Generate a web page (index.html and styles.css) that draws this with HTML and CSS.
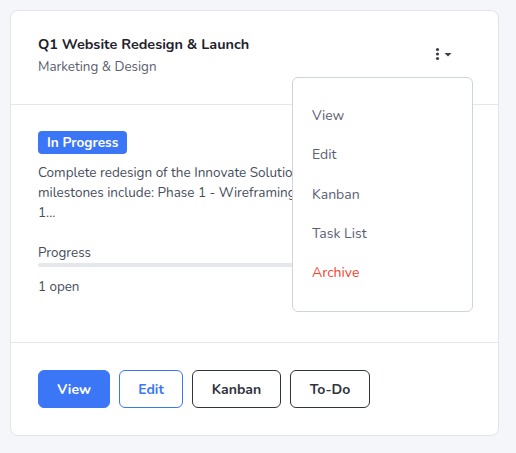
FILE: index.html
```html
<!DOCTYPE html>
<html>
<head>
<meta charset="utf-8">
<link rel="stylesheet" href="styles.css">
</head>
<body>
<div class="page">
  <div class="card">
    <div class="card-header">
      <div class="titles">
        <div class="title">Q1 Website Redesign &amp; Launch</div>
        <div class="subtitle">Marketing &amp; Design</div>
      </div>
      <div class="menu-wrap">
        <button class="kebab" aria-label="More">
          <svg width="20" height="14" viewBox="0 0 20 14">
            <circle cx="3.5" cy="2.5" r="1.6" fill="#3a3f4b"/>
            <circle cx="3.5" cy="7" r="1.6" fill="#3a3f4b"/>
            <circle cx="3.5" cy="11.5" r="1.6" fill="#3a3f4b"/>
            <path d="M10.5 6 L17.5 6 L14 9.5 Z" fill="#3a3f4b"/>
          </svg>
        </button>
        <ul class="dropdown">
          <li>View</li>
          <li>Edit</li>
          <li>Kanban</li>
          <li>Task List</li>
          <li class="danger">Archive</li>
        </ul>
      </div>
    </div>
    <div class="card-body">
      <span class="badge">In Progress</span>
      <p class="desc">Complete redesign of the Innovate Solutions corporate website. Key<br>milestones include: Phase 1 - Wireframing &amp; Prototyping (Due: Jan<br>1...</p>
      <div class="progress-label">Progress</div>
      <div class="progress"><div class="progress-fill" style="width:0%"></div></div>
      <div class="open">1 open</div>
    </div>
    <div class="card-footer">
      <button class="btn btn-primary">View</button>
      <button class="btn btn-outline-primary">Edit</button>
      <button class="btn btn-outline-dark btn-kanban">Kanban</button>
      <button class="btn btn-outline-dark btn-todo">To-Do</button>
    </div>
  </div>
</div>
</body>
</html>
```
FILE: styles.css
```css
* { box-sizing: border-box; }
html, body {
  margin: 0;
  padding: 0;
  background: #f4f6fa;
  font-family: "Nunito", "Lato", "Noto Sans", sans-serif;
}
.page {
  padding: 10px 17px 17px 10px;
}
.card {
  width: 489px;
  background: #fff;
  border: 1px solid #e1e4ea;
  border-radius: 8px;
}
.card-header {
  display: flex;
  justify-content: space-between;
  align-items: flex-start;
  padding: 23px 27px 28px 27px;
  border-bottom: 1px solid #e6e8ee;
}
.title {
  font-size: 14.4px;
  font-weight: 700;
  line-height: 21px;
  color: #1e222c;
}
.subtitle {
  margin-top: 3px;
  font-size: 13.4px;
  line-height: 18px;
  color: #5a6070;
}
.menu-wrap {
  position: relative;
  margin-top: 13px;
  margin-right: 17px;
}
.kebab {
  display: block;
  border: 0;
  background: transparent;
  padding: 0;
  width: 20px;
  height: 14px;
  cursor: pointer;
}
.kebab svg { display: block; }
.dropdown {
  position: absolute;
  top: 30px;
  right: -19px;
  width: 181px;
  margin: 0;
  padding: 18px 0 19px;
  list-style: none;
  background: #fff;
  border: 1px solid #cfd3dd;
  border-radius: 6px;
  z-index: 5;
}
.dropdown li {
  padding: 0 19px;
  line-height: 39.3px;
  font-size: 14px;
  color: #5a6074;
}
.dropdown li.danger { color: #f4432f; }
.card-body {
  padding: 26px 27px 45px 27px;
  border-bottom: 1px solid #e6e8ee;
}
.badge {
  display: inline-block;
  height: 23px;
  line-height: 23px;
  padding: 0 9px;
  background: #3b76f6;
  color: #fff;
  font-size: 13.6px;
  font-weight: 700;
  border-radius: 4px;
}
.desc {
  margin: 9px 0 0;
  font-size: 13.5px;
  line-height: 20px;
  color: #474d5c;
  white-space: nowrap;
  overflow: hidden;
}
.progress-label {
  margin-top: 20px;
  font-size: 13.4px;
  line-height: 20px;
  color: #474d5c;
}
.progress {
  height: 4px;
  background: #e4e7ec;
  border-radius: 2px;
  overflow: hidden;
}
.progress-fill {
  height: 100%;
  background: #3b76f6;
}
.open {
  margin-top: 10px;
  font-size: 13.4px;
  line-height: 20px;
  color: #474d5c;
}
.card-footer {
  display: flex;
  gap: 9px;
  padding: 27px;
}
.btn {
  height: 38px;
  padding: 0;
  font-family: inherit;
  font-size: 14px;
  font-weight: 700;
  border-radius: 6px;
  background: #fff;
  cursor: pointer;
}
.btn-primary {
  background: #3b76f6;
  border: 1px solid #3b76f6;
  color: #fff;
  width: 72px;
}
.btn-outline-primary {
  border: 1px solid #3b76f6;
  color: #3b76f6;
  width: 64px;
}
.btn-outline-dark {
  border: 1px solid #2f333d;
  color: #2f333d;
}
.btn-kanban { width: 89px; }
.btn-todo { width: 80px; }
```
